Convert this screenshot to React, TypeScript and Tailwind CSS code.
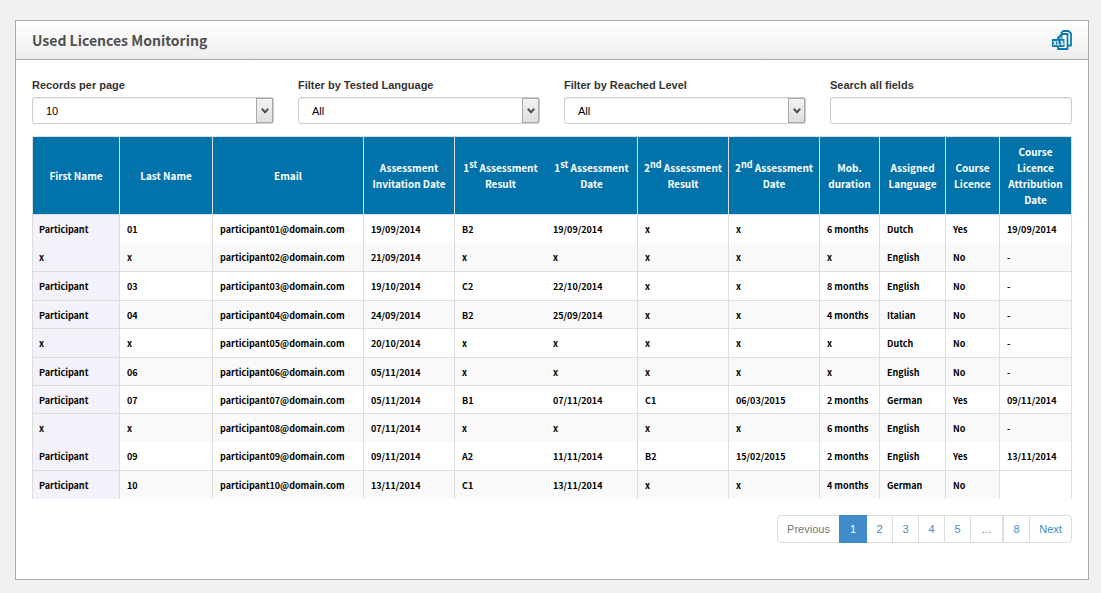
import React from "react";

const SOURCE_FONT = "font-['Noto_Sans_CJK_SC',sans-serif]";

const columns: { label: React.ReactNode; key: string; col: string }[] = [
  { key: "first", label: "First Name", col: "w-[87px]" },
  { key: "last", label: "Last Name", col: "w-[93px]" },
  { key: "email", label: "Email", col: "w-[151px]" },
  { key: "invite", label: <>Assessment<br />Invitation Date</>, col: "w-[91px]" },
  { key: "r1", label: <>1<Sup>st</Sup> Assessment<br />Result</>, col: "w-[91px]" },
  { key: "d1", label: <>1<Sup>st</Sup> Assessment<br />Date</>, col: "w-[92px]" },
  { key: "r2", label: <>2<Sup>nd</Sup> Assessment<br />Result</>, col: "w-[91px]" },
  { key: "d2", label: <>2<Sup>nd</Sup> Assessment<br />Date</>, col: "w-[91px]" },
  { key: "mob", label: <>Mob.<br />duration</>, col: "w-[60px]" },
  { key: "lang", label: <>Assigned<br />Language</>, col: "w-[66px]" },
  { key: "course", label: <>Course<br />Licence</>, col: "w-[54px]" },
  { key: "attr", label: <>Course<br />Licence<br />Attribution<br />Date</>, col: "w-[72px]" },
];

const rows: string[][] = [
  ["Participant", "01", "participant01@domain.com", "19/09/2014", "B2", "19/09/2014", "x", "x", "6 months", "Dutch", "Yes", "19/09/2014"],
  ["x", "x", "participant02@domain.com", "21/09/2014", "x", "x", "x", "x", "x", "English", "No", "-"],
  ["Participant", "03", "participant03@domain.com", "19/10/2014", "C2", "22/10/2014", "x", "x", "8 months", "English", "No", "-"],
  ["Participant", "04", "participant04@domain.com", "24/09/2014", "B2", "25/09/2014", "x", "x", "4 months", "Italian", "No", "-"],
  ["x", "x", "participant05@domain.com", "20/10/2014", "x", "x", "x", "x", "x", "Dutch", "No", "-"],
  ["Participant", "06", "participant06@domain.com", "05/11/2014", "x", "x", "x", "x", "x", "English", "No", "-"],
  ["Participant", "07", "participant07@domain.com", "05/11/2014", "B1", "07/11/2014", "C1", "06/03/2015", "2 months", "German", "Yes", "09/11/2014"],
  ["x", "x", "participant08@domain.com", "07/11/2014", "x", "x", "x", "x", "6 months", "English", "No", "-"],
  ["Participant", "09", "participant09@domain.com", "09/11/2014", "A2", "11/11/2014", "B2", "15/02/2015", "2 months", "English", "Yes", "13/11/2014"],
  ["Participant", "10", "participant10@domain.com", "13/11/2014", "C1", "13/11/2014", "x", "x", "4 months", "German", "No", ""],
];

const borderlessRows = [0, 1, 8];
const tallRows = [2, 4, 7, 9];

function Sup({ children }: { children: React.ReactNode }) {
  return <span className="align-[4px] text-[9px] leading-0">{children}</span>;
}

function XlsIcon() {
  return (
    <svg viewBox="0 0 20 20" className="size-5" aria-hidden="true">
      <path d="M9 3.500L11 1h5.500L19 3.500V15.500H15.500" fill="#fff" stroke="#0a78ae" strokeWidth="1.800" strokeLinejoin="round" />
      <path d="M6 8L10 4h5.500V19H6z" fill="#fff" stroke="#0a78ae" strokeWidth="1.800" strokeLinejoin="round" />
      <path d="M6 8h4V4" fill="none" stroke="#0a78ae" strokeWidth="1.200" />
      <rect x="0" y="9" width="12.500" height="8" fill="#0a78ae" />
      <path d="M1.500 11l2.800 4.200M4.300 11l-2.800 4.200M5.900 10.800v4h2M11.200 11.300H9.300v1.700h1.700v1.800H8.900" fill="none" stroke="#fff" strokeWidth="1.100" />
    </svg>
  );
}

function SelectField({ id, label, options }: { id: string; label: string; options: string[] }) {
  return (
    <div>
      <label htmlFor={id} className="block text-[11px] leading-4 font-bold text-[#333]">{label}</label>
      <div className="relative mt-1">
        <select
          id={id}
          className="block h-[27px] w-full appearance-none rounded-[3px] border border-[#ccc] bg-white pt-px pr-6 pl-[13px] text-[11px] text-black shadow-[inset_0_1px_1px_rgba(0,0,0,0.075)]"
        >
          {options.map((o) => <option key={o}>{o}</option>)}
        </select>
        <span className="pointer-events-none absolute inset-y-px right-px flex w-[17px] items-center justify-center border border-[#aaa] bg-linear-to-b from-[#f2f2f2] to-[#dfdfdf]">
          <svg viewBox="0 0 8 6" className="h-1.5 w-2" aria-hidden="true">
            <path d="M0.800 0.800L4 4.200L7.200 0.800" fill="none" stroke="#505050" strokeWidth="2" />
          </svg>
        </span>
      </div>
    </div>
  );
}

function Pagination() {
  const item = "flex h-7 items-center justify-center border border-[#ddd] bg-white";
  const link = "-ml-px w-[27px] text-[#428bca] hover:bg-gray-100";
  return (
    <nav aria-label="Pages" className="mt-4 flex justify-end text-[11px]">
      <button type="button" disabled className={`${item} w-[63px] rounded-l-[4px] text-[#777]`}>Previous</button>
      <a href="#1" aria-current="page" className="z-1 -ml-px flex h-7 w-7 items-center justify-center bg-[#428bca] text-white">1</a>
      {["2", "3", "4", "5"].map((p) => (
        <a key={p} href={`#${p}`} className={`${item} ${link}`}>{p}</a>
      ))}
      <span className={`${item} -ml-px w-[33px] text-[#777]`}>…</span>
      <a href="#8" className={`${item} w-[27px] text-[#428bca]`}>8</a>
      <a href="#next" className={`${item} -ml-px w-[43px] rounded-r-[4px] text-[#428bca]`}>Next</a>
    </nav>
  );
}

export default function App() {
  return (
    <div className="min-h-screen bg-[#f1f1f1] pt-5 pr-3 pb-3 pl-[15px] font-['Liberation_Sans',Arial,sans-serif]">
      <section className="border border-[#aaa] bg-white">
        <header className="flex h-[39px] items-center justify-between border-b border-[#aaa] bg-linear-to-b from-white to-[#eee] px-4">
          <h1 className={`${SOURCE_FONT} text-[14px] leading-5 font-bold text-[#505050]`}>Used Licences Monitoring</h1>
          <button type="button" aria-label="Export to XLS"><XlsIcon /></button>
        </header>

        <div className="px-4 pt-[17px] pb-9">
          <div className="grid grid-cols-4 gap-6">
            <SelectField id="records" label="Records per page" options={["10", "25", "50"]} />
            <SelectField id="language" label="Filter by Tested Language" options={["All", "Dutch", "English", "German", "Italian"]} />
            <SelectField id="level" label="Filter by Reached Level" options={["All", "A2", "B1", "B2", "C1", "C2"]} />
            <div>
              <label htmlFor="search" className="block text-[11px] leading-4 font-bold text-[#333]">Search all fields</label>
              <input
                id="search"
                type="text"
                className="mt-1 block h-[27px] w-full rounded-[3px] border border-[#ccc] bg-white px-3 text-[11px] shadow-[inset_0_1px_1px_rgba(0,0,0,0.075)]"
              />
            </div>
          </div>

          <table className={`${SOURCE_FONT} mt-3 w-full table-fixed border-separate border-spacing-0 border-l border-[#ddd] text-[9px] leading-4 font-bold text-black`}>
            <colgroup>
              {columns.map((c) => <col key={c.key} className={c.col} />)}
            </colgroup>
            <thead>
              <tr className="h-[79px] bg-[#0272aa] text-center text-[10px] text-white">
                {columns.map((c) => (
                  <th
                    key={c.key}
                    scope="col"
                    className={`border-y border-[#ddd] p-0 align-middle whitespace-nowrap ${c.key === "r1" ? "" : "border-r"} ${c.key === "d1" ? "border-l-0" : ""}`}
                  >
                    {c.label}
                  </th>
                ))}
              </tr>
            </thead>
            <tbody>
              {rows.map((row, r) => (
                <tr key={r} className={`even:bg-[#f9f9f9] ${tallRows.includes(r) ? "h-[29px]" : "h-7"}`}>
                  {row.map((cell, c) => (
                    <td
                      key={c}
                      className={`border-[#ddd] pt-0.5 pr-0 pb-0 align-middle whitespace-nowrap ${c === 0 ? "bg-[#f3f2fa] pl-1.5" : "pl-[7px]"} ${
                        c === 4 ? "" : "border-r"
                      } ${borderlessRows.includes(r) ? "" : "border-t"} ${cell === "" ? "bg-white" : ""}`}
                    >
                      {cell}
                    </td>
                  ))}
                </tr>
              ))}
            </tbody>
          </table>

          <Pagination />
        </div>
      </section>
    </div>
  );
}
